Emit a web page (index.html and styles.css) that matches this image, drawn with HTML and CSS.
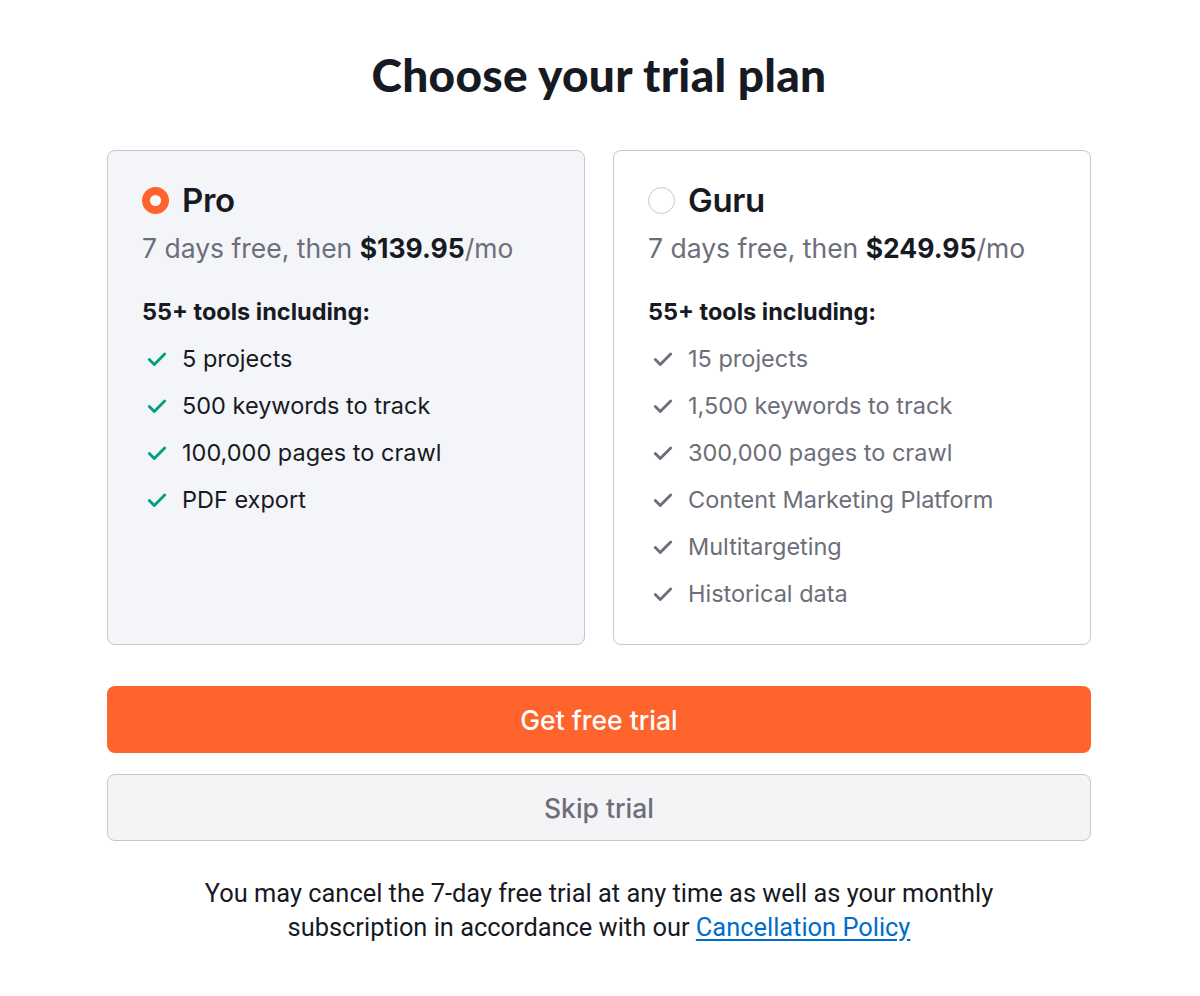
FILE: index.html
```html
<!DOCTYPE html>
<html>
<head>
<meta charset="utf-8">
<link rel="stylesheet" href="styles.css">
</head>
<body>
<main class="page">
  <h1 class="title">Choose your trial plan</h1>
  <div class="plans">
    <div class="card card-selected">
      <div class="plan-head">
        <span class="radio radio-on"></span>
        <span class="plan-name">Pro</span>
      </div>
      <div class="price">7 days free, then <b>$139.95</b>/mo</div>
      <div class="tools">55+ tools including:</div>
      <ul class="features features-green">
        <li><svg class="check" viewBox="0 0 20 20"><path d="M3 10.5l4.5 4.5L17 5.5"/></svg>5 projects</li>
        <li><svg class="check" viewBox="0 0 20 20"><path d="M3 10.5l4.5 4.5L17 5.5"/></svg>500 keywords to track</li>
        <li><svg class="check" viewBox="0 0 20 20"><path d="M3 10.5l4.5 4.5L17 5.5"/></svg>100,000 pages to crawl</li>
        <li><svg class="check" viewBox="0 0 20 20"><path d="M3 10.5l4.5 4.5L17 5.5"/></svg>PDF export</li>
      </ul>
    </div>
    <div class="card">
      <div class="plan-head">
        <span class="radio"></span>
        <span class="plan-name">Guru</span>
      </div>
      <div class="price">7 days free, then <b>$249.95</b>/mo</div>
      <div class="tools">55+ tools including:</div>
      <ul class="features features-gray">
        <li><svg class="check" viewBox="0 0 20 20"><path d="M3 10.5l4.5 4.5L17 5.5"/></svg>15 projects</li>
        <li><svg class="check" viewBox="0 0 20 20"><path d="M3 10.5l4.5 4.5L17 5.5"/></svg>1,500 keywords to track</li>
        <li><svg class="check" viewBox="0 0 20 20"><path d="M3 10.5l4.5 4.5L17 5.5"/></svg>300,000 pages to crawl</li>
        <li><svg class="check" viewBox="0 0 20 20"><path d="M3 10.5l4.5 4.5L17 5.5"/></svg>Content Marketing Platform</li>
        <li><svg class="check" viewBox="0 0 20 20"><path d="M3 10.5l4.5 4.5L17 5.5"/></svg>Multitargeting</li>
        <li><svg class="check" viewBox="0 0 20 20"><path d="M3 10.5l4.5 4.5L17 5.5"/></svg>Historical data</li>
      </ul>
    </div>
  </div>
  <button class="btn btn-primary">Get free trial</button>
  <button class="btn btn-secondary">Skip trial</button>
  <p class="note">You may cancel the 7-day free trial at any time as well as your monthly<br>subscription in accordance with our <a href="#">Cancellation Policy</a></p>
</main>
</body>
</html>
```
FILE: styles.css
```css
* { box-sizing: border-box; }
body {
  margin: 0;
  background: #fff;
  font-family: Inter, "Noto Sans", sans-serif;
  color: #171a22;
}
.page {
  width: 984px;
  margin: 0 0 0 107px;
  padding-top: 47px;
  display: flex;
  flex-direction: column;
}
.title {
  margin: 0 0 47px;
  text-align: center;
  font-family: Lato, sans-serif;
  font-weight: 900;
  font-size: 46px;
  line-height: 56px;
  letter-spacing: 0.3px;
  color: #171a22;
}
.plans {
  display: grid;
  grid-template-columns: 1fr 1fr;
  gap: 28px;
}
.card {
  height: 495px;
  border: 1px solid #c4c7cf;
  border-radius: 8px;
  background: #fff;
  padding: 29px 34px;
}
.card-selected { background: #f4f5f9; }
.plan-head {
  display: flex;
  align-items: center;
  gap: 13px;
  height: 40px;
}
.radio {
  width: 27px;
  height: 27px;
  border-radius: 50%;
  border: 1.5px solid #c4c7cf;
  background: #fff;
  flex: none;
}
.radio-on {
  border: 8.5px solid #ff642d;
  background: #fff;
}
.plan-name {
  font-size: 33px;
  font-weight: 600;
  letter-spacing: -0.3px;
  color: #171a22;
}
.price {
  margin-top: 10px;
  font-size: 26.5px;
  line-height: 36px;
  color: #6c6e79;
}
.price b { color: #171a22; font-weight: 700; }
.tools {
  margin-top: 31px;
  font-size: 23.5px;
  line-height: 30px;
  font-weight: 700;
  color: #171a22;
}
.features {
  list-style: none;
  margin: 8px 0 0;
  padding: 0;
}
.features li {
  display: flex;
  align-items: center;
  height: 47px;
  font-size: 23.5px;
}
.check {
  width: 22px;
  height: 22px;
  margin: 0 14px 0 4px;
  fill: none;
  stroke-width: 2.6;
  stroke-linecap: round;
  stroke-linejoin: round;
  flex: none;
}
.features-green li { color: #171a22; }
.features-green .check { stroke: #009f81; }
.features-gray li { color: #6c6e79; }
.features-gray .check { stroke: #6c6e79; }
.btn {
  width: 100%;
  height: 67px;
  border-radius: 8px;
  font-family: Inter, "Noto Sans", sans-serif;
  font-size: 26.5px;
  cursor: pointer;
}
.btn-primary {
  margin-top: 41px;
  background: #ff642d;
  border: none;
  color: #fff;
  font-weight: 500;
}
.btn-secondary {
  margin-top: 21px;
  background: #f4f4f6;
  border: 1px solid #c4c7cf;
  color: #6c6e79;
  font-weight: 500;
}
.note {
  margin: 35px 0 0;
  text-align: center;
  font-family: Roboto, sans-serif;
  font-size: 25.4px;
  line-height: 34px;
  color: #171a22;
}
.note a { color: #006dca; text-decoration: underline; text-underline-offset: 3px; }
```
